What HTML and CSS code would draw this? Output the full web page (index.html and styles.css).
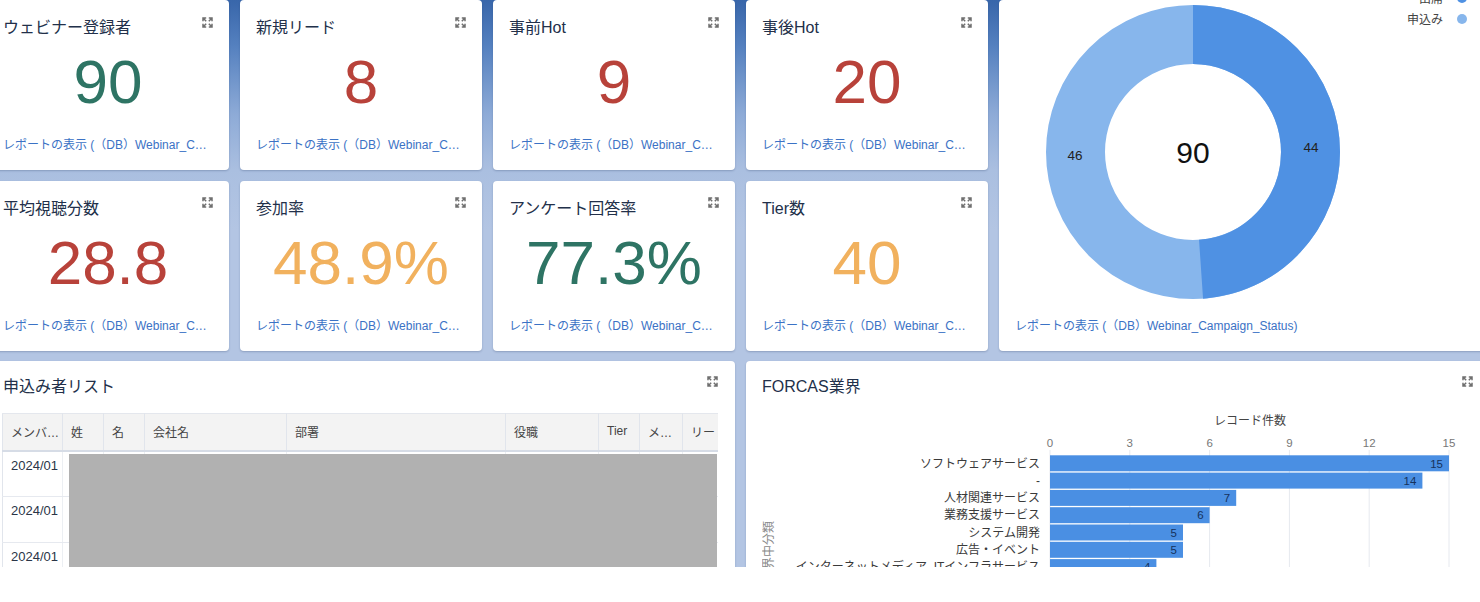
FILE: index.html
```html
<!DOCTYPE html>
<html lang="ja">
<head>
<meta charset="utf-8">
<title>Webinar Dashboard</title>
<link rel="stylesheet" href="styles.css">
</head>
<body>
<svg width="0" height="0" class="defs" aria-hidden="true">
  <symbol id="ico-expand" viewBox="0 0 11 11">
    <path d="M1 4.2V1h3.2M1 1l3.2 3.2M6.8 1H10v3.2M10 1L6.8 4.2M1 6.8V10h3.2M1 10l3.2-3.2M6.8 10H10V6.8M10 10L6.8 6.8" fill="none" stroke="#6f6f6f" stroke-width="1.5"/>
  </symbol>
</svg>
<div class="viewport">
  <main class="dashboard">
    <section class="card kpi">
      <header class="card-head"><h2 class="card-title">ウェビナー登録者</h2><svg class="expand"><use href="#ico-expand"/></svg></header>
      <div class="kpi-value green">90</div>
      <a class="report-link">レポートの表示 (（DB）Webinar_Campaign_Status)</a>
    </section>
    <section class="card kpi">
      <header class="card-head"><h2 class="card-title">新規リード</h2><svg class="expand"><use href="#ico-expand"/></svg></header>
      <div class="kpi-value red">8</div>
      <a class="report-link">レポートの表示 (（DB）Webinar_Campaign_Status)</a>
    </section>
    <section class="card kpi">
      <header class="card-head"><h2 class="card-title">事前Hot</h2><svg class="expand"><use href="#ico-expand"/></svg></header>
      <div class="kpi-value red">9</div>
      <a class="report-link">レポートの表示 (（DB）Webinar_Campaign_Status)</a>
    </section>
    <section class="card kpi">
      <header class="card-head"><h2 class="card-title">事後Hot</h2><svg class="expand"><use href="#ico-expand"/></svg></header>
      <div class="kpi-value red">20</div>
      <a class="report-link">レポートの表示 (（DB）Webinar_Campaign_Status)</a>
    </section>

    <section class="card donut-card">
      <ul class="legend">
        <li><span>出席</span><span class="dot dot-dark"></span></li>
        <li><span>申込み</span><span class="dot dot-light"></span></li>
      </ul>
      <svg class="donut" viewBox="0 0 300 300">
        <circle cx="150" cy="150" r="117.5" fill="none" stroke="#87b6ec" stroke-width="59"/>
        <circle cx="150" cy="150" r="117.5" fill="none" stroke="#4f91e3" stroke-width="59" stroke-dasharray="360.9 800" transform="rotate(-90 150 150)"/>
        <text x="268" y="150" class="donut-num">44</text>
        <text x="32" y="158" class="donut-num">46</text>
        <text x="150" y="161" class="donut-total">90</text>
      </svg>
      <a class="report-link">レポートの表示 (（DB）Webinar_Campaign_Status)</a>
    </section>

    <section class="card kpi">
      <header class="card-head"><h2 class="card-title">平均視聴分数</h2><svg class="expand"><use href="#ico-expand"/></svg></header>
      <div class="kpi-value red">28.8</div>
      <a class="report-link">レポートの表示 (（DB）Webinar_Campaign_Status)</a>
    </section>
    <section class="card kpi">
      <header class="card-head"><h2 class="card-title">参加率</h2><svg class="expand"><use href="#ico-expand"/></svg></header>
      <div class="kpi-value orange">48.9%</div>
      <a class="report-link">レポートの表示 (（DB）Webinar_Campaign_Status)</a>
    </section>
    <section class="card kpi">
      <header class="card-head"><h2 class="card-title">アンケート回答率</h2><svg class="expand"><use href="#ico-expand"/></svg></header>
      <div class="kpi-value green">77.3%</div>
      <a class="report-link">レポートの表示 (（DB）Webinar_Campaign_Status)</a>
    </section>
    <section class="card kpi">
      <header class="card-head"><h2 class="card-title">Tier数</h2><svg class="expand"><use href="#ico-expand"/></svg></header>
      <div class="kpi-value orange">40</div>
      <a class="report-link">レポートの表示 (（DB）Webinar_Campaign_Status)</a>
    </section>

    <section class="card table-card">
      <header class="card-head"><h2 class="card-title">申込み者リスト</h2><svg class="expand"><use href="#ico-expand"/></svg></header>
      <div class="table-wrap">
        <table class="data-table">
          <colgroup>
            <col class="c60"><col class="c41"><col class="c41"><col class="c142"><col class="c219"><col class="c93"><col class="c41"><col class="c43"><col class="c80">
          </colgroup>
          <thead>
            <tr><th>メンバーステータス更新日</th><th>姓</th><th>名</th><th>会社名</th><th>部署</th><th>役職</th><th>Tier</th><th>メールアドレス</th><th>リードソース</th></tr>
          </thead>
          <tbody>
            <tr><td>2024/01</td><td></td><td></td><td></td><td></td><td></td><td></td><td></td><td></td></tr>
            <tr><td>2024/01</td><td></td><td></td><td></td><td></td><td></td><td></td><td></td><td></td></tr>
            <tr><td>2024/01</td><td></td><td></td><td></td><td></td><td></td><td></td><td></td><td></td></tr>
          </tbody>
        </table>
        <div class="redacted"></div>
      </div>
    </section>

    <section class="card chart-card">
      <header class="card-head"><h2 class="card-title">FORCAS業界</h2><svg class="expand"><use href="#ico-expand"/></svg></header>
      <svg class="bar-chart" viewBox="0 0 711 200">
        <text x="488" y="19" class="axis-title">レコード件数</text>
        <g class="grid">
          <line x1="288" y1="44" x2="288" y2="200"/>
          <line x1="367.8" y1="44" x2="367.8" y2="200"/>
          <line x1="447.6" y1="44" x2="447.6" y2="200"/>
          <line x1="527.4" y1="44" x2="527.4" y2="200"/>
          <line x1="607.2" y1="44" x2="607.2" y2="200"/>
          <line x1="687" y1="44" x2="687" y2="200"/>
        </g>
        <g class="ticks">
          <text x="288" y="41" text-anchor="start">0</text>
          <text x="367.8" y="41">3</text>
          <text x="447.6" y="41">6</text>
          <text x="527.4" y="41">9</text>
          <text x="607.2" y="41">12</text>
          <text x="687" y="41" text-anchor="end">15</text>
        </g>
        <g class="bars">
          <rect x="288" y="49.3" width="399" height="16"/>
          <rect x="288" y="66.6" width="372.4" height="16"/>
          <rect x="288" y="83.9" width="186.2" height="16"/>
          <rect x="288" y="101.2" width="159.6" height="16"/>
          <rect x="288" y="118.5" width="133" height="16"/>
          <rect x="288" y="135.8" width="133" height="16"/>
          <rect x="288" y="153.1" width="106.4" height="16"/>
        </g>
        <g class="cats">
          <text x="278" y="61.5">ソフトウェアサービス</text>
          <text x="278" y="78.8">-</text>
          <text x="278" y="96.1">人材関連サービス</text>
          <text x="278" y="113.4">業務支援サービス</text>
          <text x="278" y="130.7">システム開発</text>
          <text x="278" y="148">広告・イベント</text>
          <text x="278" y="165.3">インターネットメディア, ITインフラサービス</text>
        </g>
        <g class="vals">
          <text x="681" y="61.5">15</text>
          <text x="654.4" y="78.8">14</text>
          <text x="468.2" y="96.1">7</text>
          <text x="441.6" y="113.4">6</text>
          <text x="415" y="130.7">5</text>
          <text x="415" y="148">5</text>
          <text x="388.4" y="165.3">4</text>
        </g>
        <text class="y-title" transform="translate(7 145) rotate(-90)" y="4">業界中分類</text>
      </svg>
    </section>
  </main>
</div>
</body>
</html>
```
FILE: styles.css
```css
* { box-sizing: border-box; }

html, body {
  margin: 0;
  padding: 0;
  background: #ffffff;
}

body {
  width: 1480px;
  height: 602px;
  overflow: hidden;
  font-family: "Liberation Sans", "Noto Sans CJK JP", sans-serif;
  color: #222;
  text-spacing-trim: space-all;
}

.defs { position: absolute; }

.viewport {
  height: 567px;
  overflow: hidden;
  background: linear-gradient(180deg, #3866aa 0px, #5480bf 45px, #8eabd7 115px, #aabfe0 170px, #b3c5e3 230px, #b3c5e3 100%);
}

.dashboard {
  width: 1502px;
  margin-left: -13px;
  display: grid;
  grid-template-columns: repeat(4, 242px) 1fr;
  grid-template-rows: 170px 170px 300px;
  column-gap: 11px;
  row-gap: 10.5px;
}

.card {
  background: #ffffff;
  border-radius: 4px;
  box-shadow: 0 1px 2px rgba(40, 60, 100, 0.28);
  min-width: 0;
}

.card-head {
  display: flex;
  justify-content: space-between;
  align-items: flex-start;
}

.card-title {
  margin: 0;
  font-size: 16px;
  font-weight: 400;
  line-height: 22px;
  color: #22304a;
  white-space: nowrap;
  padding-top: 1px;
}

.expand {
  flex: none;
  width: 11px;
  height: 11px;
  margin-top: 0.5px;
}

/* KPI cards */
.kpi {
  display: flex;
  flex-direction: column;
  padding: 16px 16px 17px;
}

.kpi-value {
  margin-top: 12px;
  font-size: 62px;
  line-height: 62px;
  text-align: center;
}

.green { color: #2e7464; }
.red { color: #b8423a; }
.orange { color: #f1b15e; }

.report-link {
  display: block;
  margin-top: auto;
  font-size: 12px;
  line-height: 16px;
  color: #3b72c5;
  white-space: nowrap;
  overflow: hidden;
  text-overflow: ellipsis;
  text-decoration: none;
}

/* Donut */
.donut-card {
  grid-column: 5;
  grid-row: 1 / span 2;
  position: relative;
  display: flex;
  flex-direction: column;
  padding: 0 16px 17px;
}

.donut {
  display: block;
  width: 300px;
  height: 300px;
  margin: 2px 0 0 28px;
}

.donut-num {
  font-family: "Liberation Sans", sans-serif;
  font-size: 13.5px;
  fill: #222;
  text-anchor: middle;
}

.donut-total {
  font-family: "Liberation Sans", sans-serif;
  font-size: 30px;
  fill: #111;
  text-anchor: middle;
}

.legend {
  position: absolute;
  top: -13px;
  right: 22px;
  margin: 0;
  padding: 0;
  list-style: none;
  font-size: 12px;
  color: #444;
}

.legend li {
  display: flex;
  align-items: center;
  justify-content: flex-end;
  gap: 14px;
  height: 21px;
}

.dot {
  width: 10px;
  height: 10px;
  border-radius: 50%;
}

.dot-dark { background: #4f91e3; }
.dot-light { background: #87b6ec; }

/* Table */
.table-card {
  grid-column: 1 / span 3;
  display: flex;
  flex-direction: column;
  padding: 14px 17px 0 16px;
}

.table-wrap {
  position: relative;
  width: 716px;
  margin-top: 15px;
  margin-left: -1px;
  overflow: hidden;
}

.data-table {
  width: 760px;
  table-layout: fixed;
  border-collapse: collapse;
  font-size: 13px;
}

.c60 { width: 60px; }
.c41 { width: 41px; }
.c142 { width: 142px; }
.c219 { width: 219px; }
.c93 { width: 93px; }
.c43 { width: 43px; }
.c80 { width: 80px; }

.data-table th {
  height: 37px;
  padding: 0 2px 1px 8px;
  background: #f3f3f3;
  border-top: 1px solid #e4e7ed;
  border-right: 1px solid #e1e5ec;
  border-bottom: 2px solid #d6dce6;
  font-size: 12px;
  font-weight: 400;
  text-align: left;
  color: #444;
  white-space: nowrap;
  overflow: hidden;
  text-overflow: ellipsis;
}

.data-table th:first-child,
.data-table td:first-child {
  border-left: 1px solid #e1e5ec;
}

.data-table td {
  height: 46px;
  padding: 6px 8px 8px;
  vertical-align: top;
  line-height: 16px;
  border-right: 1px solid #eceff3;
  border-bottom: 1px solid #e6e9ef;
  color: #2a3547;
  white-space: nowrap;
  overflow: hidden;
}

.redacted {
  position: absolute;
  left: 67px;
  top: 41px;
  width: 648px;
  height: 150px;
  background: #b1b1b1;
}

/* Bar chart */
.chart-card {
  grid-column: 4 / span 2;
  display: flex;
  flex-direction: column;
  padding: 14px 16px 0;
}

.bar-chart {
  display: block;
  width: 711px;
  height: 200px;
  margin-top: 8px;
  font-family: "Liberation Sans", "Noto Sans CJK JP", sans-serif;
}

.axis-title {
  font-size: 12px;
  fill: #444;
  text-anchor: middle;
}

.grid line {
  stroke: #e6e9ef;
  stroke-width: 1;
}

.ticks text {
  font-size: 11.5px;
  fill: #777;
  text-anchor: middle;
}

.bars rect { fill: #4a8fe3; }

.cats text {
  font-size: 12px;
  fill: #3a3a3a;
  text-anchor: end;
}

.vals text {
  font-size: 11.5px;
  fill: #16325c;
  text-anchor: end;
}

.y-title {
  font-size: 12px;
  fill: #888;
  text-anchor: middle;
}
```
